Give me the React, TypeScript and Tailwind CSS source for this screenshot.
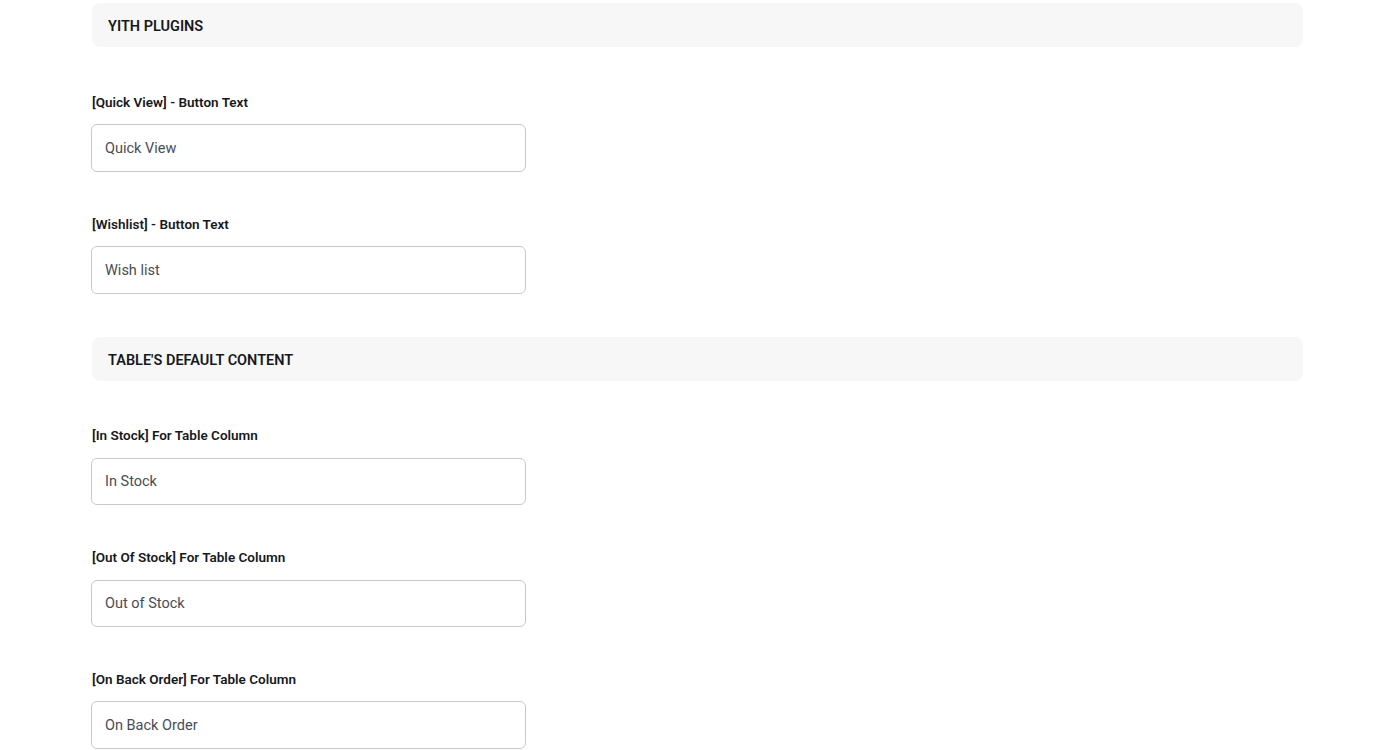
import React from 'react';

const Section: React.FC<{ title: string; className?: string }> = ({ title, className }) => (
  <div className={`h-[44px] w-full rounded-lg bg-[#f7f7f7] pl-4 pt-[4px] flex items-center ${className ?? ''}`}>
    <h2 className="text-[14.5px] font-semibold uppercase text-[#16191c]">{title}</h2>
  </div>
);

const Field: React.FC<{ label: string; value: string; className?: string }> = ({ label, value, className }) => (
  <div className={className}>
    <label className="block text-[13.5px] leading-[18px] font-semibold text-[#16191c]">{label}</label>
    <input
      type="text"
      defaultValue={value}
      className="mt-[13.3px] -ml-px block h-[47.5px] w-[435px] rounded-md border border-[#c9c9c9] bg-white px-[13px] text-[14.5px] text-[#474d54] outline-none"
    />
  </div>
);

export default function App() {
  return (
    <div className="min-h-screen bg-white" style={{ fontFamily: 'Roboto, "Liberation Sans", sans-serif' }}>
      <div className="ml-[92px] w-[1211px] pt-[3px]">
        <Section title="YITH Plugins" />
        <Field className="mt-[46px]" label="[Quick View] - Button Text" value="Quick View" />
        <Field className="mt-[43.2px]" label="[Wishlist] - Button Text" value="Wish list" />
        <Section className="mt-[43px]" title="Table's Default Content" />
        <Field className="mt-[45.6px]" label="[In Stock] For Table Column" value="In Stock" />
        <Field className="mt-[43.1px]" label="[Out Of Stock] For Table Column" value="Out of Stock" />
        <Field className="mt-[43.1px]" label="[On Back Order] For Table Column" value="On Back Order" />
      </div>
    </div>
  );
}
